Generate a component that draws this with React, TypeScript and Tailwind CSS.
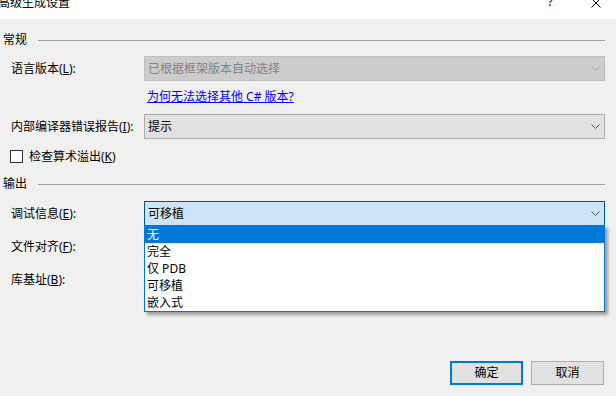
import React from "react";

const FONT = '"Noto Sans", "Noto Sans CJK SC", sans-serif';

function Chevron({ color }: { color: string }) {
  return (
    <svg width="9" height="5" viewBox="0 0 9 5" className="shrink-0">
      <polyline points="0.5,0.5 4.5,4.5 8.5,0.5" fill="none" stroke={color} strokeWidth="1" />
    </svg>
  );
}

function Combo({
  text,
  variant,
}: {
  text: string;
  variant: "disabled" | "normal" | "focused";
}) {
  const cls =
    variant === "disabled"
      ? "bg-[#cccccc] border-[#bfbfbf] text-[#838383]"
      : variant === "normal"
      ? "bg-[#e1e1e1] border-[#adadad] text-black"
      : "bg-[#cce4f7] border-[#005499] text-black";
  const chev = variant === "disabled" ? "#a8a8a8" : "#505050";
  return (
    <div className={`h-[25px] w-[461px] border flex items-center pl-[3px] pr-[4px] ${cls}`}>
      <span className="flex-1 leading-[16px]">{text}</span>
      <Chevron color={chev} />
    </div>
  );
}

function Label({ children }: { children: React.ReactNode }) {
  return <div className="w-[144px] pl-[11px] shrink-0 leading-[16px]">{children}</div>;
}

function Section({ title, className }: { title: string; className: string }) {
  return (
    <div className={`h-[16px] flex items-center pl-[3px] ${className}`}>
      <span className="leading-[16px]">{title}</span>
      <div className="ml-[11px] flex-1 h-px bg-[#a0a0a0]" />
    </div>
  );
}

export default function App() {
  const items = ["无", "完全", "仅 PDB", "可移植", "嵌入式"];
  return (
    <div
      className="w-[616px] h-[396px] bg-[#f0f0f0] overflow-hidden flex flex-col text-[12px] text-black"
      style={{ fontFamily: FONT }}
    >
      {/* title bar */}
      <div className="h-[19px] bg-white flex items-start shrink-0 overflow-hidden">
        <span className="-mt-[5px] -ml-[2px] leading-[16px]">高级生成设置</span>
        <span className="ml-auto -mt-[6px] leading-[16px] text-[12px] mr-[38px]">?</span>
        <svg width="10" height="10" viewBox="0 0 10 10" className="-mt-[2px] mr-[15px]">
          <line x1="0.5" y1="0.5" x2="9.5" y2="9.5" stroke="#000" strokeWidth="1" />
          <line x1="9.5" y1="0.5" x2="0.5" y2="9.5" stroke="#000" strokeWidth="1" />
        </svg>
      </div>

      <div className="flex flex-col flex-1 pr-[11px]">
        <Section title="常规" className="mt-[13px]" />

        <div className="mt-[8px] flex items-center">
          <Label>
            语言版本(<u>L</u>):
          </Label>
          <Combo text="已根据框架版本自动选择" variant="disabled" />
        </div>

        <div className="mt-[8px] h-[16px] pl-[147px] leading-[16px]">
          <span className="text-[#0000ff] underline">为何无法选择其他 C# 版本?</span>
        </div>

        <div className="mt-[9px] flex items-center">
          <Label>
            内部编译器错误报告(<u>I</u>):
          </Label>
          <Combo text="提示" variant="normal" />
        </div>

        <div className="mt-[11px] h-[13px] flex items-center pl-[10px]">
          <div className="w-[13px] h-[13px] border border-[#333333] bg-white shrink-0" />
          <span className="ml-[6px] leading-[16px]">
            检查算术溢出(<u>K</u>)
          </span>
        </div>

        <Section title="输出" className="mt-[13px]" />

        <div className="mt-[9px] flex items-center">
          <Label>
            调试信息(<u>E</u>):
          </Label>
          <div className="relative">
            <Combo text="可移植" variant="focused" />
            <div className="absolute left-0 top-[24px] w-[461px] h-[87px] border border-[#0078d7] bg-white shadow-[3px_3px_3px_rgba(0,0,0,0.35)] z-10 flex flex-col">
              {items.map((it, i) => (
                <div
                  key={it}
                  className={`h-[17px] pl-[2px] leading-[17px] ${
                    i === 0 ? "bg-[#0078d7] text-white" : "text-black"
                  }`}
                >
                  {it}
                </div>
              ))}
            </div>
          </div>
        </div>

        <div className="mt-[13px] h-[16px] flex items-center">
          <Label>
            文件对齐(<u>F</u>):
          </Label>
        </div>

        <div className="mt-[17px] h-[16px] flex items-center">
          <Label>
            库基址(<u>B</u>):
          </Label>
        </div>

        <div className="mt-auto mb-[11px] flex justify-end gap-[8px] pr-[1px]">
          <div className="w-[73px] h-[24px] border-2 border-[#0078d7] bg-[#e1e1e1] flex items-center justify-center leading-[16px]">
            确定
          </div>
          <div className="w-[73px] h-[24px] border border-[#adadad] bg-[#e1e1e1] flex items-center justify-center leading-[16px]">
            取消
          </div>
        </div>
      </div>
    </div>
  );
}
